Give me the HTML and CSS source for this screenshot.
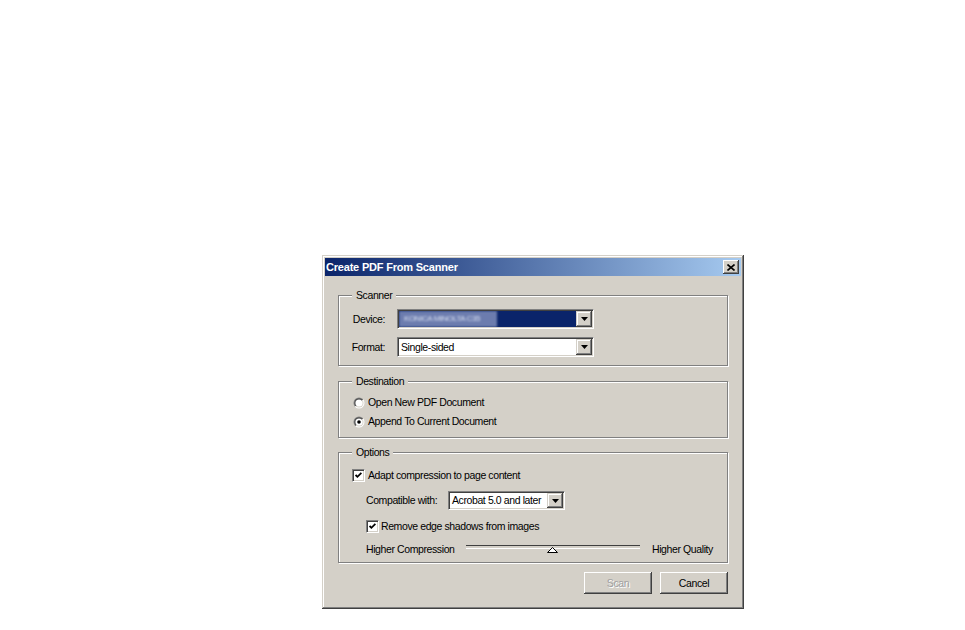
FILE: index.html
```html
<!DOCTYPE html>
<html>
<head>
<meta charset="utf-8">
<title>Create PDF From Scanner</title>
<link rel="stylesheet" href="styles.css">
</head>
<body>
<div class="window">
  <div class="titlebar">
    <span class="title">Create PDF From Scanner</span>
    <button class="close" aria-label="Close">
      <svg width="8" height="7" viewBox="0 0 8 7"><path d="M0.5 0.5 L7.5 6.5 M7.5 0.5 L0.5 6.5" stroke="#000" stroke-width="1.6" fill="none"/></svg>
    </button>
  </div>
  <div class="content">
    <div class="group group-scanner">
      <span class="legend">Scanner</span>
      <div class="field-row">
        <span class="field-label">Device:</span>
        <div class="combo combo-wide">
          <div class="combo-value selected"><span class="blurred">KONICA MINOLTA C35</span></div>
          <span class="combo-btn"><svg width="7" height="4" viewBox="0 0 7 4"><path d="M0 0 H7 L3.5 4 Z" fill="#000"/></svg></span>
        </div>
      </div>
      <div class="field-row field-row-gap">
        <span class="field-label">Format:</span>
        <div class="combo combo-wide">
          <div class="combo-value">Single-sided</div>
          <span class="combo-btn"><svg width="7" height="4" viewBox="0 0 7 4"><path d="M0 0 H7 L3.5 4 Z" fill="#000"/></svg></span>
        </div>
      </div>
    </div>

    <div class="group group-destination">
      <span class="legend">Destination</span>
      <div class="option-row">
        <svg class="radio" width="12" height="12" viewBox="0 0 12 12">
          <defs>
            <linearGradient id="ro" x1="0" y1="0" x2="1" y2="1"><stop offset="0.5" stop-color="#808080"/><stop offset="0.5" stop-color="#ffffff"/></linearGradient>
            <linearGradient id="ri" x1="0" y1="0" x2="1" y2="1"><stop offset="0.5" stop-color="#404040"/><stop offset="0.5" stop-color="#d4d0c8"/></linearGradient>
          </defs>
          <circle cx="6" cy="6" r="5.5" fill="url(#ro)"/>
          <circle cx="6" cy="6" r="4.5" fill="url(#ri)"/>
          <circle cx="6" cy="6" r="3.6" fill="#fff"/>
        </svg>
        <span class="row-text">Open New PDF Document</span>
      </div>
      <div class="option-row">
        <svg class="radio" width="12" height="12" viewBox="0 0 12 12">
          <circle cx="6" cy="6" r="5.5" fill="url(#ro)"/>
          <circle cx="6" cy="6" r="4.5" fill="url(#ri)"/>
          <circle cx="6" cy="6" r="3.6" fill="#fff"/>
          <circle cx="6" cy="6" r="1.8" fill="#000"/>
        </svg>
        <span class="row-text">Append To Current Document</span>
      </div>
    </div>

    <div class="group group-options">
      <span class="legend">Options</span>
      <div class="option-row">
        <span class="checkbox"><svg width="7" height="7" viewBox="0 0 7 7"><path d="M0.6 3 L2.4 4.8 L6.4 0.8" stroke="#000" stroke-width="1.8" fill="none"/></svg></span>
        <span class="row-text">Adapt compression to page content</span>
      </div>
      <div class="sub-row compat-row">
        <span class="compat-label row-text">Compatible with:</span>
        <div class="combo combo-small">
          <div class="combo-value">Acrobat 5.0 and later</div>
          <span class="combo-btn"><svg width="7" height="4" viewBox="0 0 7 4"><path d="M0 0 H7 L3.5 4 Z" fill="#000"/></svg></span>
        </div>
      </div>
      <div class="sub-row check-row">
        <span class="checkbox"><svg width="7" height="7" viewBox="0 0 7 7"><path d="M0.6 3 L2.4 4.8 L6.4 0.8" stroke="#000" stroke-width="1.8" fill="none"/></svg></span>
        <span class="check-text row-text">Remove edge shadows from images</span>
      </div>
      <div class="sub-row slider-row">
        <span class="slider-label row-text">Higher Compression</span>
        <div class="track">
          <span class="thumb"><svg width="11" height="6" viewBox="0 0 11 6"><path d="M0.5 5.5 L5.5 0.5 L10.5 5.5 Z" fill="#fff" stroke="#000" stroke-width="1"/></svg></span>
        </div>
        <span class="slider-label-right row-text">Higher Quality</span>
      </div>
    </div>

    <div class="actions">
      <button class="btn btn-disabled" disabled>Scan</button>
      <button class="btn">Cancel</button>
    </div>
  </div>
</div>
</body>
</html>
```

FILE: styles.css
```css
* { box-sizing: border-box; }

html, body {
  margin: 0;
  background: #ffffff;
}

body {
  font-family: "Liberation Sans", Arial, sans-serif;
  font-size: 10.5px;
  letter-spacing: -0.4px;
  color: #000;
}

.window {
  margin: 255px 0 0 322px;
  width: 422px;
  height: 354px;
  padding: 3px;
  background: #d4d0c8;
  box-shadow: inset -1px -1px #404040, inset 1px 1px #d4d0c8, inset -2px -2px #808080, inset 2px 2px #ffffff;
  display: flex;
  flex-direction: column;
}

.titlebar {
  height: 18px;
  flex: none;
  background: linear-gradient(90deg, #0a246a, #a6caf0);
  display: flex;
  align-items: center;
  justify-content: space-between;
  padding: 0 2px 0 1px;
}

.title {
  color: #fff;
  font-weight: bold;
  font-size: 11px;
  letter-spacing: -0.2px;
}

.close {
  width: 16px;
  height: 14px;
  padding: 0;
  margin: 0;
  border: 0;
  background: #d4d0c8;
  box-shadow: inset -1px -1px #404040, inset 1px 1px #ffffff, inset -2px -2px #808080, inset 2px 2px #d4d0c8;
  display: flex;
  align-items: center;
  justify-content: center;
}

.content {
  flex: 1;
  padding: 19px 13px 0;
  display: flex;
  flex-direction: column;
}

.group {
  position: relative;
  border: 1px solid #808080;
  box-shadow: inset 1px 1px #ffffff, 1px 1px #ffffff;
  flex: none;
}

.legend {
  position: absolute;
  top: -7px;
  left: 13px;
  padding: 0 4px;
  line-height: 13px;
  background: #d4d0c8;
  white-space: nowrap;
}

.group-scanner {
  height: 71px;
  margin-bottom: 15px;
  padding-top: 13px;
}

.group-destination {
  height: 57px;
  margin-bottom: 14px;
  padding: 11px 0 0 14px;
}

.group-options {
  height: 111px;
  padding: 13px 0 0 13px;
}

.row-text {
  padding-bottom: 1px;
}

.field-row {
  display: flex;
  align-items: center;
  gap: 12px;
}

.field-row-gap { margin-top: 8px; }

.field-label {
  width: 46px;
  text-align: right;
  padding-bottom: 1px;
}

.combo {
  display: flex;
  height: 20px;
  padding: 1px;
  border: 1px solid;
  border-color: #808080 #ffffff #ffffff #808080;
  box-shadow: inset 1px 1px #404040, inset -1px -1px #d4d0c8;
  background: #ffffff;
}

.combo-wide { width: 197px; }

.combo-small {
  width: 117px;
  height: 19px;
}

.combo-value {
  flex: 1;
  min-width: 0;
  padding-left: 2px;
  padding-bottom: 1px;
  display: flex;
  align-items: center;
  white-space: nowrap;
  overflow: hidden;
}

.combo-value.selected {
  padding-left: 0;
  padding-bottom: 0;
  background: #0a246a;
}

.blurred {
  display: block;
  width: 98px;
  height: 100%;
  padding-left: 5px;
  background: #6c7cae;
  color: #d8e0f2;
  font-size: 8px;
  line-height: 16px;
  filter: blur(1.2px);
  overflow: hidden;
}

.combo-btn {
  width: 16px;
  flex: none;
  background: #d4d0c8;
  box-shadow: inset -1px -1px #404040, inset 1px 1px #d4d0c8, inset -2px -2px #808080, inset 2px 2px #ffffff;
  display: flex;
  align-items: center;
  justify-content: center;
}

.option-row {
  height: 19px;
  display: flex;
  align-items: center;
  gap: 3px;
}

.radio { flex: none; }

.checkbox {
  width: 13px;
  height: 13px;
  flex: none;
  border: 1px solid;
  border-color: #808080 #ffffff #ffffff #808080;
  box-shadow: inset 1px 1px #404040, inset -1px -1px #d4d0c8;
  background: #ffffff;
  display: flex;
  align-items: center;
  justify-content: center;
}

.sub-row {
  display: flex;
  align-items: center;
  padding-left: 14px;
}

.compat-row {
  margin-top: 6px;
  height: 19px;
}

.compat-label { width: 82px; }

.check-row {
  margin-top: 7px;
  height: 19px;
  gap: 2px;
}

.slider-row {
  margin-top: 4px;
  height: 19px;
}

.slider-label { width: 100px; }

.track {
  position: relative;
  width: 174px;
  height: 19px;
  margin-right: 12px;
}

.track::before {
  content: "";
  display: block;
  margin-top: 5px;
  height: 2px;
  border-top: 1px solid #404040;
  border-bottom: 1px solid #ffffff;
}

.thumb {
  position: absolute;
  left: 81px;
  top: 7px;
  width: 11px;
  height: 6px;
  display: block;
  line-height: 0;
}

.actions {
  margin-top: 9px;
  display: flex;
  justify-content: flex-end;
  gap: 8px;
}

.btn {
  width: 68px;
  height: 22px;
  padding: 0 0 1px;
  margin: 0;
  border: 0;
  font: inherit;
  letter-spacing: inherit;
  color: #000;
  background: #d4d0c8;
  box-shadow: inset -1px -1px #404040, inset 1px 1px #ffffff, inset -2px -2px #808080, inset 2px 2px #d4d0c8;
}

.btn-disabled {
  color: #a0a0a0;
  text-shadow: 1px 1px #ffffff;
}
```
